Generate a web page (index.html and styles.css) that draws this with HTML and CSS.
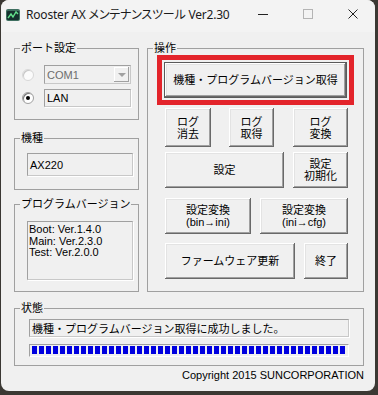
FILE: index.html
```html
<!DOCTYPE html>
<html lang="ja">
<head>
    <meta charset="UTF-8">
    <meta name="viewport" content="width=device-width, initial-scale=1.0">
    <title>Rooster AX メンテナンスツール Ver2.30</title>
    <link rel="stylesheet" href="styles.css">
</head>
<body>
    <div class="window">
        <div class="titlebar">
            <svg class="app-icon" width="14" height="12" viewBox="0 0 14 12">
                <rect x="0" y="0" width="14" height="12" rx="2" fill="#3f6f60"/>
                <rect x="1" y="2" width="12" height="9" rx="1" fill="#15302e"/>
                <polyline points="2,9 5,5 7,8 10,3 12,5" fill="none" stroke="#63e08c" stroke-width="1.4"/>
            </svg>
            <span class="title">Rooster AX メンテナンスツール Ver2.30</span>
            <div class="caption-buttons">
                <span class="cap">
                    <svg width="10" height="10" viewBox="0 0 10 10"><line x1="0" y1="5.5" x2="10" y2="5.5" stroke="#222" stroke-width="1"/></svg>
                </span>
                <span class="cap">
                    <svg width="10" height="10" viewBox="0 0 10 10"><rect x="0.5" y="0.5" width="9" height="9" fill="none" stroke="#b4b4b4" stroke-width="1"/></svg>
                </span>
                <span class="cap">
                    <svg width="10" height="10" viewBox="0 0 10 10"><path d="M0.5 0.5 L9.5 9.5 M9.5 0.5 L0.5 9.5" stroke="#222" stroke-width="1"/></svg>
                </span>
            </div>
        </div>

        <div class="client">
            <div class="top">
                <div class="left-col">
                    <fieldset class="group port">
                        <legend>ポート設定</legend>
                        <div class="group-body">
                            <div class="port-row">
                                <span class="radio off"></span>
                                <div class="combo">
                                    <span>COM1</span>
                                    <span class="drop"><span class="arrow"></span></span>
                                </div>
                            </div>
                            <div class="port-row lan">
                                <span class="radio on"></span>
                                <div class="field">LAN</div>
                            </div>
                        </div>
                    </fieldset>

                    <fieldset class="group model">
                        <legend>機種</legend>
                        <div class="group-body">
                            <div class="field model-box">AX220</div>
                        </div>
                    </fieldset>

                    <fieldset class="group version">
                        <legend>プログラムバージョン</legend>
                        <div class="group-body">
                            <div class="field memo">Boot: Ver.1.4.0<br>Main: Ver.2.3.0<br>Test: Ver.2.0.0</div>
                        </div>
                    </fieldset>
                </div>

                <fieldset class="group ops">
                    <legend>操作</legend>
                    <div class="group-body">
                        <div class="highlight">
                            <button class="btn default w-main">機種・プログラムバージョン取得</button>
                        </div>
                        <div class="btn-row row-log">
                            <button class="btn w-log1">ログ<br>消去</button>
                            <button class="btn w-log2">ログ<br>取得</button>
                            <button class="btn w-log3">ログ<br>変換</button>
                        </div>
                        <div class="btn-row row-set">
                            <button class="btn w-set">設定</button>
                            <button class="btn w-init">設定<br>初期化</button>
                        </div>
                        <div class="btn-row row-conv">
                            <button class="btn w-conv1">設定変換<br>(bin→ini)</button>
                            <button class="btn w-conv2">設定変換<br>(ini→cfg)</button>
                        </div>
                        <div class="btn-row row-fw">
                            <button class="btn w-fw">ファームウェア更新</button>
                            <button class="btn w-exit">終了</button>
                        </div>
                    </div>
                </fieldset>
            </div>

            <fieldset class="group status">
                <legend>状態</legend>
                <div class="group-body">
                    <div class="field status-text">機種・プログラムバージョン取得に成功しました。</div>
                    <div class="progress"><div class="progress-fill"></div></div>
                </div>
            </fieldset>

            <div class="copyright">Copyright 2015 SUNCORPORATION</div>
        </div>
    </div>
</body>
</html>
```

FILE: styles.css
```css
html, body { margin: 0; }
body {
    width: 378px;
    height: 395px;
    background: #3b3833;
    font-family: "Liberation Sans", "Noto Sans CJK JP", sans-serif;
    font-size: 11px;
    color: #000;
    overflow: hidden;
}

.window {
    margin-left: 1px;
    width: 374px;
    height: 391px;
    border-radius: 8px;
    overflow: hidden;
    background: #f0f0f0;
}

/* title bar */
.titlebar {
    height: 31px;
    display: flex;
    align-items: center;
    background: #f3f3f3;
    padding-bottom: 1px;
}
.app-icon { margin: 0 6px 1px 5px; }
.title {
    font-family: "Noto Sans", "Noto Sans CJK JP", sans-serif;
    font-size: 12px;
    font-feature-settings: "palt";
    letter-spacing: -0.2px;
    color: #1a1a1a;
    margin-bottom: 3px;
    flex: 1;
}
.caption-buttons { display: flex; margin-bottom: 3px; }
.cap {
    width: 45px;
    height: 28px;
    display: flex;
    align-items: center;
    justify-content: center;
}

/* client area */
.client { padding: 9px 11px 0 13px; }
.top {
    display: grid;
    grid-template-columns: 125px 217px;
    column-gap: 8px;
}
.left-col { display: flex; flex-direction: column; }

.group {
    margin: 0;
    padding: 0;
    border: 1px solid #a0a0a0;
    min-width: 0;
}
.group legend {
    margin-left: 5px;
    padding: 0 1px;
    line-height: 14px;
    font-size: 11px;
}

/* port */
.port .group-body { padding: 10px 0 12px 7px; }
.port-row { display: flex; align-items: center; height: 19px; }
.port-row.lan { margin-top: 5px; height: 18px; }
.radio {
    width: 12px;
    height: 12px;
    box-sizing: border-box;
    border-radius: 50%;
    border: 1px solid #a0a0a0;
    background: #fff;
    box-shadow: inset 1px 1px 0 #7a7a7a;
    margin-right: 10px;
    position: relative;
}
.radio.off { background: #fbfbfb; border-color: #d8d8d8; box-shadow: inset 1px 1px 0 #c8c8c8; }
.radio.on::after {
    content: "";
    position: absolute;
    left: 3px;
    top: 3px;
    width: 4px;
    height: 4px;
    border-radius: 50%;
    background: #000;
}

.field {
    box-sizing: border-box;
    border: 1px solid #a0a0a0;
    border-right-color: #c8c8c8;
    border-bottom-color: #c8c8c8;
    box-shadow: 1px 1px 0 #fff;
    background: #f0f0f0;
    padding-left: 2px;
    display: flex;
    align-items: center;
}
.port-row .field { width: 87px; height: 18px; }

.combo {
    box-sizing: border-box;
    width: 87px;
    height: 19px;
    border: 1px solid #a0a0a0;
    border-right-color: #c8c8c8;
    border-bottom-color: #c8c8c8;
    background: #f0f0f0;
    color: #6d6d6d;
    display: flex;
    align-items: center;
    justify-content: space-between;
    padding: 0 1px 0 2px;
}
.drop {
    width: 15px;
    height: 15px;
    box-sizing: border-box;
    box-shadow: inset -1px -1px #a0a0a0, inset 1px 1px #fff;
    display: flex;
    align-items: center;
    justify-content: center;
}
.arrow {
    width: 0;
    height: 0;
    border-left: 4px solid transparent;
    border-right: 4px solid transparent;
    border-top: 4px solid #a0a0a0;
}

/* model */
.model { margin-top: 11px; }
.model .group-body { padding: 8px 0 13px 12px; }
.model-box { width: 106px; height: 23px; }

/* version */
.version { margin-top: 7px; flex: 1; }
.version .group-body { padding: 10px 0 11px 12px; }
.memo {
    width: 106px;
    height: 59px;
    align-items: flex-start;
    padding: 2px 0 0 1px;
    line-height: 11.5px;
}

/* operation buttons */
.ops .group-body { padding: 0 0 12px 9px; }
.highlight {
    width: fit-content;
    border: 5px solid #e3242b;
    padding: 2px;
}
.btn-row { display: flex; margin-left: 8px; }
.row-log { margin-top: 3px; gap: 18px; }
.row-log .btn { height: 39px; }
.row-log .w-log3 { margin-left: 1px; }
.row-set { margin-top: 5px; gap: 9px; }
.row-conv { margin-top: 10px; gap: 9px; }
.row-fw { margin-top: 9px; gap: 9px; }

.btn {
    box-sizing: border-box;
    height: 36px;
    padding: 0;
    border: none;
    background: #f0f0f0;
    font-family: "Liberation Sans", "Noto Sans CJK JP", sans-serif;
    font-size: 11px;
    line-height: 12px;
    color: #000;
    box-shadow: inset -1px -1px #696969, inset 1px 1px #fff, inset -2px -2px #a0a0a0, inset 2px 2px #e3e3e3;
}
.btn.default {
    border: 1px solid #5a5a5a;
}
.w-main { width: 183px; }
.w-log1 { width: 46px; }
.w-log2 { width: 45px; }
.w-log3 { width: 55px; }
.w-set { width: 119px; }
.w-init { width: 55px; }
.w-conv1 { width: 86px; }
.w-conv2 { width: 88px; }
.w-fw { width: 130px; }
.w-exit { width: 44px; }

/* status */
.status { margin-top: 9px; width: 350px; box-sizing: border-box; }
.status .group-body { padding: 4px 0 8px 14px; }
.status-text { width: 320px; height: 18px; }
.progress {
    margin-top: 7px;
    box-sizing: border-box;
    width: 320px;
    height: 13px;
    border: 1px solid #a0a0a0;
    border-right-color: #fff;
    border-bottom-color: #fff;
    padding: 1px;
}
.progress-fill {
    width: 313px;
    height: 8px;
    margin-left: 1px;
    background: repeating-linear-gradient(90deg, #0000e0 0 5px, transparent 5px 7px);
}

.copyright {
    width: 350px;
    text-align: right;
    margin-top: 3px;
    line-height: 13px;
}
```
